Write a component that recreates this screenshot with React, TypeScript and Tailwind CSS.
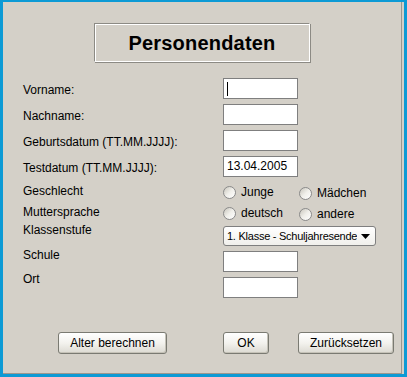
import { ReactNode } from 'react';

const font = { fontFamily: '"Liberation Sans", Arial, sans-serif' };

function TextBox({ value, caret }: { value?: string; caret?: boolean }) {
  return (
    <div className="flex h-[21px] w-[75px] items-center border border-[#7f7f7f] bg-white px-[3px] text-[12px] text-black">
      {caret ? <span className="h-[14px] w-px bg-black" /> : value}
    </div>
  );
}

function Radio({ label, className = '' }: { label: string; className?: string }) {
  return (
    <div className={`flex items-center gap-[5px] ${className}`}>
      <span className="h-[13px] w-[13px] rounded-full border border-[#8a8a8a] bg-gradient-to-br from-[#c9c6bd] via-[#f0efea] to-white" />
      <span>{label}</span>
    </div>
  );
}

function Button({ children, width }: { children: ReactNode; width: string }) {
  return (
    <button
      type="button"
      className={`flex h-[22px] ${width} items-center justify-center rounded-[3px] border border-[#7a7a72] bg-gradient-to-b from-white via-[#f3f2ee] to-[#dcdad2] text-[12px] text-black shadow-[inset_-1px_-1px_0_#c5c2b8]`}
    >
      {children}
    </button>
  );
}

export default function App() {
  const labels: [string, string][] = [
    ['Vorname:', 'h-[26px]'],
    ['Nachname:', 'h-[26px]'],
    ['Geburtsdatum (TT.MM.JJJJ):', 'h-[26px]'],
    ['Testdatum (TT.MM.JJJJ):', 'h-[23px]'],
    ['Geschlecht', 'h-[21px]'],
    ['Muttersprache', 'h-[18px]'],
    ['Klassenstufe', 'h-[25px]'],
    ['Schule', 'h-[24px]'],
    ['Ort', 'h-[13px]'],
  ];

  return (
    <div
      className="h-[377px] w-[407px] border-t-2 border-r-[3px] border-b-[3px] border-l-[3px] border-[#0c9ad5] bg-[#d4d0c8] text-[12px] text-black"
      style={font}
    >
      <div className="mr-[2px] h-full border-r border-b border-[#9a978f]">
        <div className="pl-[91px] pt-[21px]">
          <div className="flex h-[39px] w-[216px] items-center justify-center border border-t-[#8c8a84] border-l-[#8c8a84] border-r-white border-b-white shadow-[inset_1px_1px_0_#fff,1px_1px_0_#8c8a84]">
            <span className="text-[20px] font-bold tracking-[0.2px]">Personendaten</span>
          </div>
        </div>

        <div className="flex">
          <div className="w-[220px] pl-[20px] pt-[22px] leading-[13px]">
            {labels.map(([text, h]) => (
              <div key={text} className={h}>
                {text}
              </div>
            ))}
          </div>

          <div className="flex flex-col pt-[16px] leading-[13px]">
            <div className="flex flex-col gap-[5px]">
              <TextBox caret />
              <TextBox />
              <TextBox />
              <TextBox value="13.04.2005" />
            </div>
            <div className="mt-[8px] flex">
              <Radio label="Junge" className="w-[76px]" />
              <Radio label="Mädchen" className="mt-[2px]" />
            </div>
            <div className="mt-[6px] flex">
              <Radio label="deutsch" className="w-[76px]" />
              <Radio label="andere" className="mt-[2px]" />
            </div>
            <div className="mt-[5px] flex h-[20px] w-[153px] items-center gap-[4px] rounded-[3px] border border-[#7f7f7f] bg-gradient-to-b from-white to-[#f1f0ec] pl-[3px] pr-[5px]">
              <span className="flex-1 overflow-hidden whitespace-nowrap text-[11px] tracking-[-0.25px]">
                1. Klasse - Schuljahresende
              </span>
              <svg width="9" height="5" viewBox="0 0 9 5" className="shrink-0">
                <path d="M0 0h9L4.5 5z" fill="#000" />
              </svg>
            </div>
            <div className="mt-[5px] flex flex-col gap-[5px]">
              <TextBox />
              <TextBox />
            </div>
          </div>
        </div>

        <div className="mt-[34px] flex pl-[55px]">
          <Button width="w-[109px]">Alter berechnen</Button>
          <div className="ml-[56px]">
            <Button width="w-[46px]">OK</Button>
          </div>
          <div className="ml-[29px]">
            <Button width="w-[96px]">Zurücksetzen</Button>
          </div>
        </div>
      </div>
    </div>
  );
}
